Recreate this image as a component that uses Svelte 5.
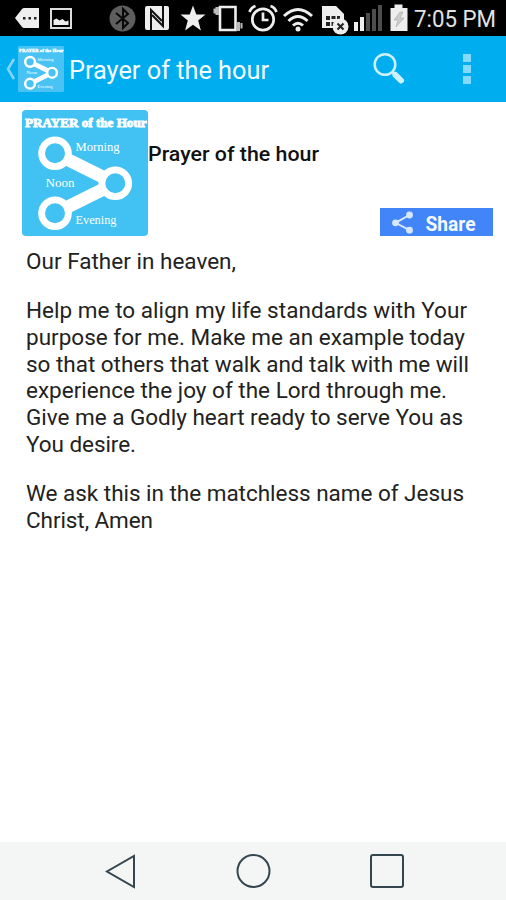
<script>
  const paragraphs = [
    [{ text: 'Our Father in heaven,', width: 210 }],
    [
      { text: 'Help me to align my life standards with Your', width: 441 },
      { text: 'purpose for me. Make me an example today', width: 439 },
      { text: 'so that others that walk and talk with me will', width: 443 },
      { text: 'experience the joy of the Lord through me.', width: 421 },
      { text: 'Give me a Godly heart ready to serve You as', width: 437 },
      { text: 'You desire.', width: 110 }
    ],
    [
      { text: 'We ask this in the matchless name of Jesus', width: 438 },
      { text: 'Christ, Amen', width: 127 }
    ]
  ];
</script>

{#snippet logo(size, background)}
  <svg class="logo" width={size} height={size} viewBox="0 0 126 126">
    <rect width="126" height="126" rx="4" fill={background} />
    <g stroke="#fff" fill={background}>
      <path d="M33 43.3 93.3 73.3 33 103.3" fill="none" stroke-width="13" />
      <circle cx="33" cy="43.3" r="13.4" stroke-width="6.8" />
      <circle cx="93.3" cy="73.3" r="13.4" stroke-width="6.8" />
      <circle cx="33" cy="103.3" r="13.4" stroke-width="6.8" />
    </g>
    <g fill="#fff" font-family="Liberation Serif, serif">
      <text x="3" y="17" font-size="11.5" font-weight="bold" stroke="#fff" stroke-width=".8" textLength="121.5" lengthAdjust="spacingAndGlyphs">PRAYER of the Hour</text>
      <text x="53.5" y="40.5" font-size="12.5" textLength="44" lengthAdjust="spacingAndGlyphs">Morning</text>
      <text x="23.5" y="77" font-size="12.5" textLength="29" lengthAdjust="spacingAndGlyphs">Noon</text>
      <text x="53.5" y="114" font-size="12.5" textLength="41" lengthAdjust="spacingAndGlyphs">Evening</text>
    </g>
  </svg>
{/snippet}

<div class="screen">
  <div class="status">
    <svg width="410" height="36" viewBox="0 0 410 36" fill="#eee">
      <!-- message -->
      <path d="M15 18 22 9q1-1 2-1h15v20H24q-1 0-2-1z" />
      <path d="M23 17h2.500v2.500H23zM28.500 17h2.500v2.500h-2.500zM34 17h2.500v2.500H34z" fill="#222" />
      <!-- picture -->
      <path d="M51 9h20v19H51z" fill="none" stroke="#ddd" stroke-width="2" />
      <path d="M53.500 25v-5l3-1.500 3 2 3-1.500 3 2.500 3-1v4.500z" />
      <!-- bluetooth -->
      <circle cx="122.500" cy="18.500" r="13" fill="#5e5e5e" />
      <path d="m116 13 12 10-5 5V9l5 5-12 10" fill="none" stroke="#080808" stroke-width="2" />
      <!-- nfc -->
      <rect x="145" y="6" width="24" height="24" rx="2" />
      <path d="M151 30V10l11 11M152 15l11 11V6" fill="none" stroke="#111" stroke-width="2" />
      <!-- star -->
      <path d="m193 5.500 3.300 9h9.200l-7.300 6 2.700 10-7.900-5.700-7.900 5.700 2.700-10-7.300-6h9.200z" />
      <!-- vibrate -->
      <path d="M220 7h15.500v23H220z" fill="none" stroke="#eee" stroke-width="2.600" />
      <path d="M213.500 8.500h2v5h-2zM215.500 7h3.500v8h-3.500zM237 22h3v9h-3zM240.500 23h2v5.500h-2z" fill="#bbb" />
      <!-- alarm -->
      <g fill="none" stroke="#eee" stroke-width="2.700">
        <circle cx="263" cy="19.500" r="10.700" />
        <path d="M263 12.500v7.500h5.500" />
        <path d="M249.500 12q1.500-4.500 6-6M270.500 6q4.500 1.500 6 6" />
      </g>
      <!-- wifi -->
      <g fill="none" stroke="#eee" stroke-width="3">
        <path d="M284 16q14-13 28 0M288.500 21q9.500-9 19 0M293 25.500q5-4.500 10 0" />
      </g>
      <circle cx="298" cy="29" r="2.500" />
      <!-- sim card -->
      <path d="M322 6h14l8 8v14h-22z" />
      <path d="M326 16h4v4h-4zM331.500 16h4v3h-4zM337 16h3v3h-3zM326 22h4v4h-4zM331.500 22h3v4h-3z" fill="#222" />
      <circle cx="340.500" cy="26.500" r="8" />
      <path d="m337.500 23.500 6 6m0-6-6 6" stroke="#222" stroke-width="2" />
      <!-- signal -->
      <path d="M354 22h4v9h-4zM360 17h4v14h-4z" />
      <path d="M366 13h4v18h-4zM372 9h4v22h-4zM378 5h4v26h-4z" fill="#4d4d4d" />
      <!-- battery -->
      <path d="M394.500 4.500h8V8h5v23h-17V8h4z" />
      <path d="m400 12-6 8h4l-2 7 8-9h-4l3-6z" fill="#ccc" stroke="#aaa" stroke-width=".6" />
    </svg>
    <svg class="clock" width="96" height="36">
      <text x="4" y="27" textLength="82" lengthAdjust="spacingAndGlyphs">7:05 PM</text>
    </svg>
  </div>

  <header>
    <svg class="back" width="11" height="24" viewBox="0 0 11 24">
      <path d="M9 2 3 12l6 10" fill="none" stroke="#86d5f6" stroke-width="2.500" />
    </svg>
    {@render logo(46, '#49c3f3')}
    <svg class="title" width="204" height="40">
      <text x="0" y="30" textLength="200" lengthAdjust="spacingAndGlyphs">Prayer of the hour</text>
    </svg>
    <svg class="search" width="34" height="34" viewBox="0 0 34 34" fill="none" stroke="#cdf1fe">
      <circle cx="13" cy="12.500" r="10.300" stroke-width="2.500" />
      <path d="m20 19.500 3 3" stroke-width="3" />
      <path d="m23.500 23 5.500 5.500" stroke-width="6" stroke-linecap="round" />
    </svg>
    <div class="menu"><i></i><i></i><i></i></div>
  </header>

  <main>
    <div class="intro">
      {@render logo(126, '#41c2f2')}
      <div class="side">
        <svg width="180" height="28">
          <text class="heading" x="0" y="21" textLength="171" lengthAdjust="spacingAndGlyphs">Prayer of the hour</text>
        </svg>
        <button>
          <svg width="113" height="28" viewBox="0 0 113 28">
            <path d="m29.500 7-14 7.800 14 7.400" fill="none" stroke="#d6e8ff" stroke-width="2" />
            <g fill="#d6e8ff">
              <circle cx="29.500" cy="7" r="3.400" />
              <circle cx="15.500" cy="14.800" r="3.400" />
              <circle cx="29.500" cy="22.200" r="3.400" />
            </g>
            <text x="45.500" y="22.500" textLength="50" lengthAdjust="spacingAndGlyphs">Share</text>
          </svg>
        </button>
      </div>
    </div>

    <article>
      {#each paragraphs as lines}
        <div class="paragraph">
          {#each lines as line}
            <svg width="460" height="26.700">
              <text x="0" y="20.500" textLength={line.width}>{line.text}</text>
            </svg>
          {/each}
        </div>
      {/each}
    </article>
  </main>

  <nav>
    <svg width="32" height="36" viewBox="0 0 32 36"><path d="M30 3v31L3 18.500z" /></svg>
    <svg width="36" height="36" viewBox="0 0 36 36"><circle cx="18.500" cy="18" r="16" /></svg>
    <svg width="36" height="36" viewBox="0 0 36 36"><rect x="2" y="2" width="32" height="32" rx="2" /></svg>
  </nav>
</div>

<style>
  :global(body) {
    margin: 0;
  }

  .screen {
    display: flex;
    flex-direction: column;
    width: 506px;
    height: 900px;
    overflow: hidden;
    background: #fff;
    font-family: Roboto, sans-serif;
  }

  svg {
    display: block;
    flex: none;
  }

  .status {
    display: flex;
    height: 36px;
    background: #000;
  }

  .clock {
    font-size: 23px;
    fill: #e2e2e2;
  }

  header {
    display: flex;
    align-items: center;
    box-sizing: border-box;
    height: 66px;
    padding-left: 5px;
    background: #00aeef;
  }

  .back {
    margin-right: 2px;
  }

  .title {
    margin-left: 5px;
    font-size: 25.5px;
    fill: #f4fcff;
  }

  .search {
    margin-left: 99px;
  }

  .menu {
    display: grid;
    gap: 3px;
    margin-left: 57px;
  }

  .menu i {
    width: 8px;
    height: 8px;
    background: #85d9fa;
  }

  main {
    flex: 1;
  }

  .intro {
    display: flex;
    padding: 8px 13px 0 22px;
  }

  .side {
    display: flex;
    flex: 1;
    flex-direction: column;
    justify-content: space-between;
    padding-top: 30px;
  }

  .heading {
    font-size: 20.5px;
    font-weight: 500;
    fill: #111;
  }

  button {
    align-self: flex-end;
    padding: 0;
    border: 0;
    background: #4285f8;
  }

  button text {
    font-family: Roboto, sans-serif;
    font-size: 20px;
    font-weight: bold;
    fill: #f5f9ff;
  }

  article {
    padding: 12px 20px 0 26px;
    font-size: 22.5px;
    fill: #222;
  }

  .paragraph {
    margin-bottom: 22.5px;
  }

  nav {
    display: flex;
    align-items: center;
    box-sizing: border-box;
    height: 58px;
    padding-left: 104px;
    gap: 98.5px;
    background: #f4f5f5;
  }

  nav svg {
    fill: none;
    stroke: #34474f;
    stroke-width: 2;
  }
</style>
